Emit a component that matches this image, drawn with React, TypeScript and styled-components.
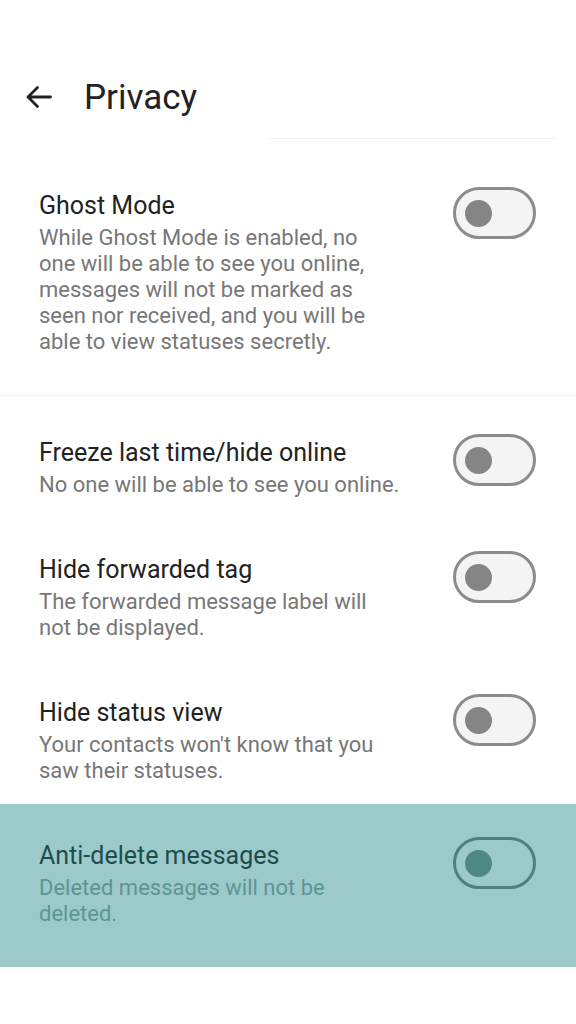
import React from "react";
import styled, { createGlobalStyle } from "styled-components";

const GlobalStyle = createGlobalStyle`
  html, body {
    margin: 0;
    padding: 0;
    background: #ffffff;
  }
  body {
    font-family: Roboto, "Noto Sans", "Liberation Sans", sans-serif;
    -webkit-font-smoothing: antialiased;
  }
`;

type Tone = "plain" | "selected";

const Screen = styled.div`
  width: 576px;
  min-height: 1024px;
  background: #ffffff;
  display: flex;
  flex-direction: column;
`;

const Header = styled.header`
  display: flex;
  align-items: center;
  gap: 32px;
  height: 56px;
  padding: 69px 0 0 25px;
`;

const BackButton = styled.button`
  display: flex;
  align-items: center;
  justify-content: center;
  width: 27px;
  height: 27px;
  padding: 0;
  border: none;
  background: none;
  color: #222222;
`;

const PageTitle = styled.h1`
  margin: 0;
  font-size: 35px;
  font-weight: 400;
  color: #222222;
`;

const HeaderRule = styled.div`
  height: 1px;
  margin: 13px 20px 0 270px;
  background: #f1f1f1;
`;

const Divider = styled.div`
  height: 1px;
  background: #f0f0f0;
`;

const Section = styled.section<{ $top: number }>`
  display: flex;
  flex-direction: column;
  padding-top: ${(p) => p.$top}px;
`;

const Row = styled.div<{ $tone: Tone; $bottom: number }>`
  display: flex;
  align-items: flex-start;
  justify-content: space-between;
  padding: 36px 40px ${(p) => p.$bottom}px 39px;
  background: ${(p) => (p.$tone === "selected" ? "#9ccacb" : "transparent")};
`;

const TextBlock = styled.div`
  display: flex;
  flex-direction: column;
`;

const Title = styled.div<{ $tone: Tone }>`
  font-size: 25px;
  line-height: 32px;
  color: ${(p) => (p.$tone === "selected" ? "#1c4d4c" : "#222222")};
`;

const Desc = styled.div<{ $tone: Tone }>`
  margin-top: 3px;
  font-size: 22px;
  line-height: 26px;
  white-space: nowrap;
  color: ${(p) => (p.$tone === "selected" ? "#5c9594" : "#777777")};
`;

const Track = styled.div<{ $tone: Tone }>`
  flex: none;
  display: flex;
  align-items: center;
  box-sizing: border-box;
  width: 83px;
  height: 52px;
  margin-top: -3px;
  padding-left: 9px;
  border-radius: 26px;
  border: 3px solid ${(p) => (p.$tone === "selected" ? "#4d8180" : "#8c8c8c")};
  background: ${(p) => (p.$tone === "selected" ? "#9ccacb" : "#f4f4f4")};
`;

const Knob = styled.div<{ $tone: Tone }>`
  width: 27px;
  height: 27px;
  border-radius: 50%;
  background: ${(p) => (p.$tone === "selected" ? "#4d8786" : "#858585")};
`;

type Setting = {
  title: string;
  lines: string[];
  tone?: Tone;
  bottom?: number;
};

const settings: Setting[] = [
  {
    title: "Freeze last time/hide online",
    lines: ["No one will be able to see you online."],
  },
  {
    title: "Hide forwarded tag",
    lines: ["The forwarded message label will", "not be displayed."],
  },
  {
    title: "Hide status view",
    lines: ["Your contacts won't know that you", "saw their statuses."],
  },
  {
    title: "Anti-delete messages",
    lines: ["Deleted messages will not be", "deleted."],
    tone: "selected",
    bottom: 40,
  },
];

const ArrowBack = () => (
  <svg width="27" height="24" viewBox="0 0 27 24" fill="none">
    <path
      d="M25.5 12H3M12.5 2.5L3 12l9.5 9.5"
      stroke="currentColor"
      strokeWidth="2.8"
      strokeLinecap="round"
      strokeLinejoin="round"
    />
  </svg>
);

const SettingRow = ({ title, lines, tone = "plain", bottom = 20 }: Setting) => (
  <Row $tone={tone} $bottom={bottom}>
    <TextBlock>
      <Title $tone={tone}>{title}</Title>
      <Desc $tone={tone}>
        {lines.map((line, i) => (
          <React.Fragment key={i}>
            {i > 0 && <br />}
            {line}
          </React.Fragment>
        ))}
      </Desc>
    </TextBlock>
    <Track $tone={tone}>
      <Knob $tone={tone} />
    </Track>
  </Row>
);

export default function App() {
  return (
    <>
      <GlobalStyle />
      <Screen>
        <Header>
          <BackButton aria-label="Back">
            <ArrowBack />
          </BackButton>
          <PageTitle>Privacy</PageTitle>
        </Header>
        <HeaderRule />

        <Section $top={15}>
          <SettingRow
            title="Ghost Mode"
            lines={[
              "While Ghost Mode is enabled, no",
              "one will be able to see you online,",
              "messages will not be marked as",
              "seen nor received, and you will be",
              "able to view statuses secretly.",
            ]}
            bottom={40}
          />
        </Section>
        <Divider />

        <Section $top={5}>
          {settings.map((s) => (
            <SettingRow key={s.title} {...s} />
          ))}
        </Section>
      </Screen>
    </>
  );
}
